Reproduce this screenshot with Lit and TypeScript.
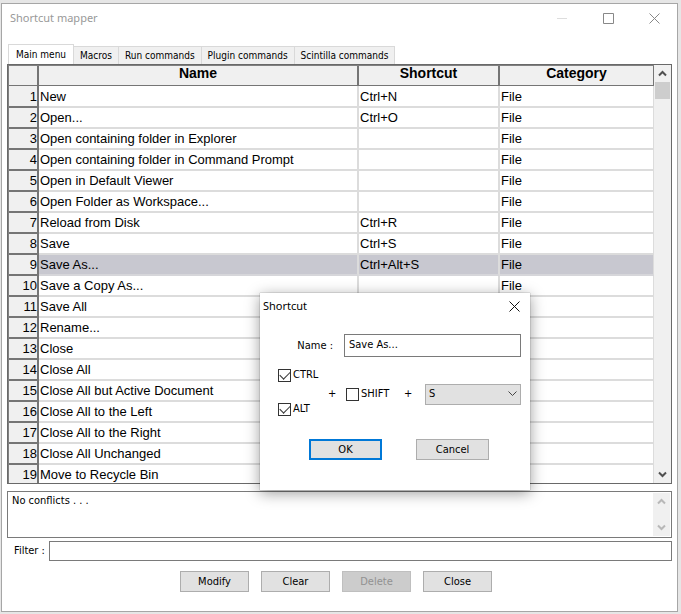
import { LitElement, html, css, svg } from "lit";
import { customElement, property, state } from "lit/decorators.js";
import { classMap } from "lit/directives/class-map.js";

interface Command {
  name: string;
  shortcut: string;
  category: string;
}

const cmd = (name: string, shortcut = "", category = "File"): Command => ({ name, shortcut, category });

const COMMANDS: Command[] = [
  cmd("New", "Ctrl+N"),
  cmd("Open...", "Ctrl+O"),
  cmd("Open containing folder in Explorer"),
  cmd("Open containing folder in Command Prompt"),
  cmd("Open in Default Viewer"),
  cmd("Open Folder as Workspace..."),
  cmd("Reload from Disk", "Ctrl+R"),
  cmd("Save", "Ctrl+S"),
  cmd("Save As...", "Ctrl+Alt+S"),
  cmd("Save a Copy As..."),
  cmd("Save All"),
  cmd("Rename..."),
  cmd("Close"),
  cmd("Close All"),
  cmd("Close All but Active Document"),
  cmd("Close All to the Left"),
  cmd("Close All to the Right"),
  cmd("Close All Unchanged"),
  cmd("Move to Recycle Bin"),
];

const TABS = ["Main menu", "Macros", "Run commands", "Plugin commands", "Scintilla commands"];

const controls = css`
  * {
    box-sizing: border-box;
  }
  button,
  input,
  select,
  textarea {
    font: inherit;
    color: inherit;
    margin: 0;
    border-radius: 0;
  }
  .push {
    height: 21px;
    padding: 0;
    border: 1px solid #adadad;
    background: #e1e1e1;
  }
  .push:disabled {
    color: #919191;
    background: #cccccc;
    border-color: #bfbfbf;
  }
  .field {
    border: 1px solid #7a7a7a;
    background: #fff;
    outline: none;
  }
  .caption {
    padding: 0;
    border: 0;
    background: none;
    display: grid;
    place-items: center;
  }
`;

@customElement("scroll-strip")
export class ScrollStrip extends LitElement {
  @property({ type: Boolean }) inactive = false;

  static styles = css`
    :host {
      display: flex;
      flex-direction: column;
      flex: none;
      width: 17px;
      background: #f0f0f0;
      color: #505050;
    }
    :host([inactive]) {
      color: #b8b8b8;
    }
    .arrow {
      height: 17px;
      display: grid;
      place-items: center;
    }
    .track {
      flex: 1;
    }
    .thumb {
      height: 17px;
      margin: 0 1px;
      background: #cdcdcd;
    }
    path {
      fill: none;
      stroke: currentColor;
      stroke-width: 2;
    }
  `;

  render() {
    return html`
      <div class="arrow"><svg width="9" height="7">${svg`<path d="M1 5.5 4.500 2 8 5.500"/>`}</svg></div>
      <div class="track">${this.inactive ? "" : html`<div class="thumb"></div>`}</div>
      <div class="arrow"><svg width="9" height="7">${svg`<path d="M1 1.500 4.500 5 8 1.500"/>`}</svg></div>
    `;
  }
}

@customElement("shortcut-dialog")
export class ShortcutDialog extends LitElement {
  static styles = [
    controls,
    css`
      :host {
        display: block;
        width: 270px;
        height: 197px;
        background: #fff;
        box-shadow: 0 0 1px rgba(0, 0, 0, 0.5), 0 3px 14px rgba(0, 0, 0, 0.4);
      }
      .title {
        display: flex;
        align-items: center;
        justify-content: space-between;
        height: 26px;
        padding: 0 10px 0 3px;
        font: 11px/16px "Noto Sans", sans-serif;
      }
      .name {
        display: flex;
        align-items: center;
        justify-content: flex-end;
        gap: 11px;
        padding: 15px 9px 0 0;
      }
      .name .field {
        width: 177px;
        height: 23px;
        padding: 0 4px 2px;
      }
      .keys {
        display: flex;
        align-items: center;
        padding: 10px 9px 0 18px;
      }
      .pair {
        display: flex;
        flex-direction: column;
        gap: 18px;
        width: 50px;
      }
      .combo {
        flex: 1;
        display: flex;
        align-items: center;
        padding-top: 4px;
      }
      .check {
        display: flex;
        align-items: center;
        gap: 2px;
        height: 16px;
      }
      .check input {
        appearance: none;
        width: 13px;
        height: 13px;
        flex: none;
        border: 1px solid #333;
        background: #fff;
        display: grid;
        place-items: center;
      }
      .check input:checked::before {
        content: "";
        width: 9px;
        height: 5px;
        border: solid #333;
        border-width: 0 0 1px 1px;
        transform: translateY(-1px) rotate(-45deg);
      }
      .plus {
        width: 8px;
        text-align: center;
      }
      .shift {
        width: 46px;
        margin: 0 12px 0 10px;
      }
      .pick {
        display: grid;
        align-items: center;
        width: 96px;
        margin-left: auto;
      }
      .pick select,
      .pick svg {
        grid-area: 1 / 1;
      }
      .pick select {
        appearance: none;
        height: 21px;
        padding: 0 3px;
        border: 1px solid #adadad;
        background: #e1e1e1;
      }
      .pick svg {
        justify-self: end;
        margin-right: 4px;
        pointer-events: none;
      }
      .actions {
        display: flex;
        gap: 34px;
        padding: 22px 0 0 49px;
      }
      .actions .push {
        width: 73px;
      }
      .actions .default {
        border: 2px solid #0078d7;
      }
    `,
  ];

  render() {
    return html`
      <div class="title">
        <span>Shortcut</span>
        <button class="caption" aria-label="Close dialog">
          <svg width="11" height="11"><path d="M.5.5l10 10M10.500.500l-10 10" stroke="#111" fill="none" /></svg>
        </button>
      </div>
      <div class="name">
        <label for="name">Name :</label>
        <input id="name" class="field" type="text" .value=${"Save As..."} />
      </div>
      <div class="keys">
        <div class="pair">
          <label class="check"><input type="checkbox" checked />CTRL</label>
          <label class="check"><input type="checkbox" checked />ALT</label>
        </div>
        <div class="combo">
          <span class="plus">+</span>
          <label class="check shift"><input type="checkbox" />SHIFT</label>
          <span class="plus">+</span>
          <div class="pick">
            <select aria-label="Key">
              <option>S</option>
            </select>
            <svg width="9" height="6"><path d="M.5.500 4.500 4.500 8.500.500" stroke="#444" fill="none" /></svg>
          </div>
        </div>
      </div>
      <div class="actions">
        <button class="push default">OK</button>
        <button class="push">Cancel</button>
      </div>
    `;
  }
}

@customElement("app-root")
export class AppRoot extends LitElement {
  @state() private tab = 0;
  @state() private selected = 8;

  static styles = [
    controls,
    css`
      :host {
        display: flex;
        height: 100vh;
        box-sizing: border-box;
        padding: 3px 3px 2px 1px;
        background: #e6e6e6;
        font: 11px/14px "DejaVu Sans Condensed", "DejaVu Sans", sans-serif;
        color: #000;
      }
      .window {
        position: relative;
        flex: 1;
        min-width: 0;
        display: flex;
        flex-direction: column;
        padding: 0 5px 19px;
        border: 1px solid #a6a6a6;
        background: #fff;
      }
      .titlebar {
        display: flex;
        align-items: center;
        height: 28px;
        padding: 0 12px 0 3px;
        color: #999;
        font: 11px/16px "Noto Sans", sans-serif;
      }
      .titlebar h1 {
        flex: 1;
        margin: 0;
        font: inherit;
      }
      .controls {
        display: flex;
        gap: 35px;
      }
      .tabs {
        display: flex;
        align-items: flex-end;
        margin: 12px 0 0 1px;
        height: 20px;
        font-size: 10px;
      }
      .tab {
        height: 18px;
        padding: 0 6px;
        border: 1px solid #d9d9d9;
        border-width: 1px 1px 0 0;
        background: #f0f0f0;
        white-space: nowrap;
      }
      .tab.active {
        height: 20px;
        padding: 0 7px;
        border-left-width: 1px;
        background: #fff;
      }
      .grid {
        flex: 1 1 0;
        min-height: 0;
        display: flex;
        border: 1px solid #696969;
      }
      .pane {
        flex: 1;
        min-width: 0;
        overflow: hidden;
        border: solid #808080;
        border-width: 1px 0 0 1px;
      }
      table {
        width: 100%;
        table-layout: fixed;
        border-collapse: separate;
        border-spacing: 0;
        font: 13px/16px "Liberation Sans", Arial, sans-serif;
      }
      .c-num {
        width: 30px;
      }
      .c-key {
        width: 141px;
      }
      .c-cat {
        width: 154px;
      }
      th,
      td {
        height: 21px;
        padding: 0 0 0 1px;
        text-align: left;
        white-space: nowrap;
        overflow: hidden;
        border: solid #dcdcdc;
        border-width: 0 2px 2px 0;
      }
      thead th {
        height: 20px;
        padding: 0;
        background: #f0f0f0;
        text-align: center;
        vertical-align: top;
        font: bold 14px/15px "Liberation Sans", Arial, sans-serif;
        border-color: #757575;
        border-bottom-width: 1px;
      }
      th:last-child,
      td:last-child {
        border-right-width: 1px;
      }
      tbody th {
        padding: 0;
        background: #f0f0f0;
        text-align: right;
        font-weight: normal;
        border-color: #757575;
      }
      tbody tr:first-child > * {
        padding-top: 1px;
        height: 22px;
      }
      .selected td {
        background: #c8c8d0;
        border-bottom-color: #d6d6da;
      }
      .messages {
        display: flex;
        height: 47px;
        margin: 7px 0 3px;
        padding: 1px;
      }
      .messages textarea {
        flex: 1;
        min-width: 0;
        padding: 1px 3px;
        border: 0;
        outline: none;
        resize: none;
        overflow: hidden;
        background: none;
      }
      .filter {
        display: flex;
        align-items: center;
        padding-left: 7px;
      }
      .filter label {
        width: 35px;
      }
      .filter .field {
        flex: 1;
        min-width: 0;
        height: 20px;
        padding: 0 4px;
      }
      .buttons {
        display: flex;
        justify-content: center;
        gap: 12px;
        margin: 10px 7px 0 0;
      }
      .buttons .push {
        width: 69px;
      }
      shortcut-dialog {
        position: absolute;
        left: 258px;
        top: 289px;
      }
    `,
  ];

  render() {
    return html`
      <main class="window">
        <header class="titlebar">
          <h1>Shortcut mapper</h1>
          <div class="controls">
            <button class="caption" aria-label="Minimize">
              <svg width="11" height="11"><path d="M0 5.500h10" stroke="#ddd" /></svg>
            </button>
            <button class="caption" aria-label="Maximize">
              <svg width="11" height="11"><path d="M.5.500h10v10H.500z" stroke="#888" fill="none" /></svg>
            </button>
            <button class="caption" aria-label="Close window">
              <svg width="11" height="11"><path d="M.5.500l10 10M10.500.500l-10 10" stroke="#888" fill="none" /></svg>
            </button>
          </div>
        </header>
        <div class="tabs" role="tablist">
          ${TABS.map(
            (label, i) => html`<button
              role="tab"
              aria-selected=${i === this.tab}
              class=${classMap({ tab: true, active: i === this.tab })}
              @click=${() => (this.tab = i)}
            >${label}</button>`
          )}
        </div>
        <section class="grid">
          <div class="pane">
            <table>
              <colgroup>
                <col class="c-num" />
                <col />
                <col class="c-key" />
                <col class="c-cat" />
              </colgroup>
              <thead>
                <tr>
                  <th></th>
                  <th scope="col">Name</th>
                  <th scope="col">Shortcut</th>
                  <th scope="col">Category</th>
                </tr>
              </thead>
              <tbody>
                ${COMMANDS.map(
                  (c, i) => html`<tr
                    class=${classMap({ selected: i === this.selected })}
                    @click=${() => (this.selected = i)}
                  >
                    <th scope="row">${i + 1}</th>
                    <td>${c.name}</td>
                    <td>${c.shortcut}</td>
                    <td>${c.category}</td>
                  </tr>`
                )}
              </tbody>
            </table>
          </div>
          <scroll-strip></scroll-strip>
        </section>
        <div class="messages field">
          <textarea readonly aria-label="Conflicts" .value=${"No conflicts . . ."}></textarea>
          <scroll-strip inactive></scroll-strip>
        </div>
        <div class="filter">
          <label for="filter">Filter :</label>
          <input id="filter" class="field" type="text" />
        </div>
        <div class="buttons">
          <button class="push">Modify</button>
          <button class="push">Clear</button>
          <button class="push" disabled>Delete</button>
          <button class="push">Close</button>
        </div>
        <shortcut-dialog role="dialog" aria-label="Shortcut"></shortcut-dialog>
      </main>
    `;
  }
}
